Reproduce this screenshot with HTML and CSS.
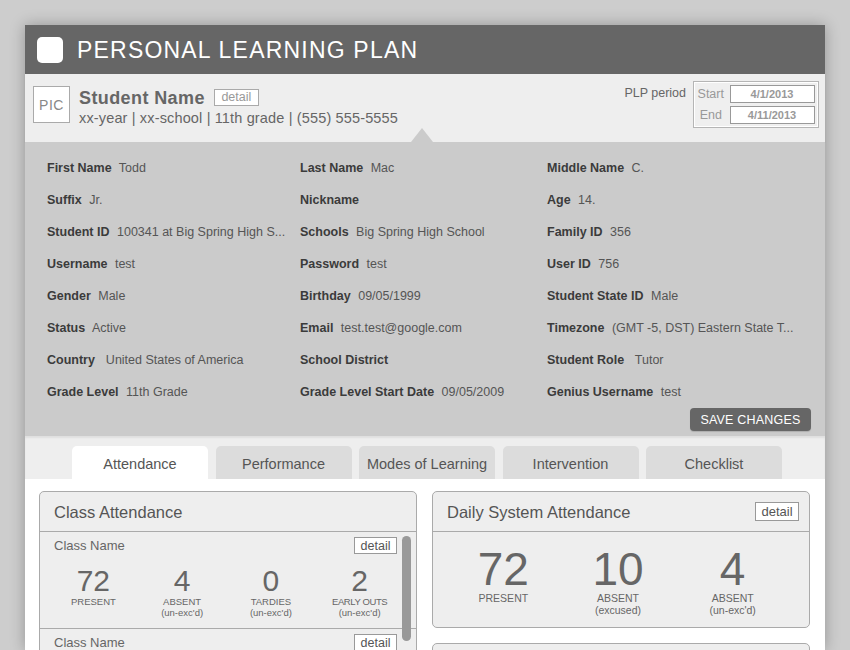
FILE: index.html
```html
<!DOCTYPE html>
<html lang="en">
<head>
<meta charset="utf-8">
<title>Personal Learning Plan</title>
<link rel="stylesheet" href="styles.css">
</head>
<body>
<div class="app">
  <header class="topbar">
    <span class="logo"></span>
    <h1 class="title">PERSONAL LEARNING PLAN</h1>
  </header>

  <section class="student">
    <div class="pic">PIC</div>
    <div class="who">
      <div class="name-line"><span class="name">Student Name</span><span class="detail-sm">detail</span></div>
      <div class="meta">xx-year | xx-school | 11th grade | (555) 555-5555</div>
    </div>
    <div class="period">
      <span class="period-label">PLP period</span>
      <div class="period-box">
        <div class="period-row"><span class="period-key">Start</span><span class="date">4/1/2013</span></div>
        <div class="period-row"><span class="period-key">End</span><span class="date">4/11/2013</span></div>
      </div>
    </div>
  </section>

  <section class="details">
    <div class="fields">
      <div class="field"><b>First Name</b> Todd</div>
      <div class="field"><b>Last Name</b> Mac</div>
      <div class="field"><b>Middle Name</b> C.</div>

      <div class="field"><b>Suffix</b> Jr.</div>
      <div class="field"><b>Nickname</b></div>
      <div class="field"><b>Age</b> 14.</div>

      <div class="field"><b>Student ID</b> 100341 at Big Spring High S...</div>
      <div class="field"><b>Schools</b> Big Spring High School</div>
      <div class="field"><b>Family ID</b> 356</div>

      <div class="field"><b>Username</b> test</div>
      <div class="field"><b>Password</b> test</div>
      <div class="field"><b>User ID</b> 756</div>

      <div class="field"><b>Gender</b> Male</div>
      <div class="field"><b>Birthday</b> 09/05/1999</div>
      <div class="field"><b>Student State ID</b> Male</div>

      <div class="field"><b>Status</b> Active</div>
      <div class="field"><b>Email</b> test.test@google.com</div>
      <div class="field"><b>Timezone</b> (GMT -5, DST) Eastern State T...</div>

      <div class="field"><b>Country</b>&nbsp; United States of America</div>
      <div class="field"><b>School District</b></div>
      <div class="field"><b>Student Role</b>&nbsp; Tutor</div>

      <div class="field"><b>Grade Level</b> 11th Grade</div>
      <div class="field"><b>Grade Level Start Date</b> 09/05/2009</div>
      <div class="field"><b>Genius Username</b> test</div>
    </div>
    <div class="actions"><button class="save">SAVE CHANGES</button></div>
  </section>

  <nav class="tabs">
    <span class="tab active">Attendance</span>
    <span class="tab">Performance</span>
    <span class="tab">Modes of Learning</span>
    <span class="tab">Intervention</span>
    <span class="tab">Checklist</span>
  </nav>

  <main class="content">
    <div class="col">
      <div class="card">
        <div class="card-head"><span class="card-title">Class Attendance</span></div>
        <div class="card-body scroll">
          <div class="class-row">
            <div class="row-head"><span class="class-name">Class Name</span><span class="detail-box">detail</span></div>
            <div class="stats four">
              <div class="stat"><span class="num">72</span><span class="lbl">PRESENT</span></div>
              <div class="stat"><span class="num">4</span><span class="lbl">ABSENT</span><span class="lbl">(un-exc'd)</span></div>
              <div class="stat"><span class="num">0</span><span class="lbl">TARDIES</span><span class="lbl">(un-exc'd)</span></div>
              <div class="stat"><span class="num">2</span><span class="lbl tight">EARLY OUTS</span><span class="lbl">(un-exc'd)</span></div>
            </div>
          </div>
          <div class="class-row">
            <div class="row-head"><span class="class-name">Class Name</span><span class="detail-box">detail</span></div>
          </div>
          <span class="scrollbar"></span>
        </div>
      </div>
    </div>
    <div class="col">
      <div class="card">
        <div class="card-head"><span class="card-title">Daily System Attendance</span><span class="detail-box big">detail</span></div>
        <div class="card-body">
          <div class="stats three">
            <div class="stat"><span class="num big">72</span><span class="lbl big">PRESENT</span></div>
            <div class="stat"><span class="num big">10</span><span class="lbl big">ABSENT</span><span class="lbl big">(excused)</span></div>
            <div class="stat"><span class="num big">4</span><span class="lbl big">ABSENT</span><span class="lbl big">(un-exc'd)</span></div>
          </div>
        </div>
      </div>
      <div class="card tall"></div>
    </div>
  </main>
</div>
</body>
</html>
```

FILE: styles.css
```css
html, body {
  margin: 0;
  padding: 0;
  height: 650px;
  overflow: hidden;
}

body {
  background: #cdcdcd;
  font-family: "Liberation Sans", Arial, sans-serif;
  color: #555;
  padding: 25px 25px 0;
  box-sizing: border-box;
}

.app {
  width: 800px;
  box-shadow: 0 0 14px rgba(0, 0, 0, 0.28);
}

/* Top bar */
.topbar {
  height: 49px;
  background: #666;
  display: flex;
  align-items: center;
  padding-left: 12px;
}

.logo {
  width: 26px;
  height: 26px;
  background: #fff;
  border-radius: 5px;
}

.title {
  margin: 2px 0 0 14px;
  color: #fff;
  font-weight: normal;
  font-size: 23px;
  letter-spacing: 1.2px;
  line-height: 1;
}

/* Student bar */
.student {
  height: 68px;
  background: #eee;
  display: flex;
  align-items: flex-start;
  padding: 0 6px 0 8px;
  box-sizing: border-box;
  box-shadow: 0 1px 1px rgba(0, 0, 0, 0.12);
  position: relative;
}

.pic {
  margin-top: 12px;
  width: 37px;
  height: 37px;
  box-sizing: border-box;
  border: 1px solid #aaa;
  background: #fff;
  color: #888;
  font-size: 14px;
  display: flex;
  align-items: center;
  justify-content: center;
  letter-spacing: 0.5px;
}

.who {
  margin-left: 9px;
  margin-top: 14.5px;
}

.name-line {
  display: flex;
  align-items: center;
  height: 20px;
}

.name {
  font-weight: bold;
  font-size: 18px;
  letter-spacing: 0.4px;
  color: #666;
}

.detail-sm {
  margin-left: 9px;
  width: 45px;
  height: 17px;
  box-sizing: border-box;
  border: 1px solid #aaa;
  background: #fff;
  color: #999;
  font-size: 12.5px;
  display: flex;
  align-items: center;
  justify-content: center;
  margin-top: -3px;
}

.meta {
  font-size: 14.5px;
  letter-spacing: 0.15px;
  color: #666;
  line-height: 18px;
}

.period {
  margin-left: auto;
  margin-top: 6.5px;
  display: flex;
  align-items: flex-start;
}

.period-label {
  font-size: 12.5px;
  color: #666;
  margin-top: 5.5px;
  margin-right: 7px;
}

.period-box {
  width: 126px;
  box-sizing: border-box;
  border: 1px solid #b5b5b5;
  box-shadow: inset 0 0 0 1px #fff;
  background: #efefef;
  padding: 3px 3px 3px 3.5px;
  display: flex;
  flex-direction: column;
  gap: 3px;
}

.period-row {
  display: flex;
  align-items: center;
}

.period-key {
  width: 26.5px;
  text-align: center;
  color: #999;
  font-size: 12.5px;
  margin-right: 5.5px;
}

.date {
  width: 85px;
  height: 18px;
  box-sizing: border-box;
  border: 1px solid #999;
  background: #fff;
  color: #999;
  font-size: 11px;
  font-weight: bold;
  display: flex;
  align-items: center;
  justify-content: center;
}

/* Details */
.details {
  background: #cbcbcb;
  padding: 10px 14px 5px 22px;
  position: relative;
}

.details::before {
  content: "";
  position: absolute;
  top: -14px;
  left: 386px;
  border-left: 11.5px solid transparent;
  border-right: 11.5px solid transparent;
  border-bottom: 14px solid #cbcbcb;
}

.fields {
  display: grid;
  grid-template-columns: 253px 247px 1fr;
  grid-auto-rows: 32px;
  align-items: center;
}

.field {
  font-size: 12.5px;
  color: #555;
  white-space: nowrap;
}

.field b {
  color: #3b3b3b;
  margin-right: 4px;
}

.actions {
  display: flex;
  justify-content: flex-end;
}

.save {
  width: 121px;
  height: 23px;
  border: none;
  border-radius: 4px;
  background: #666;
  color: #fff;
  font-family: "Liberation Sans", Arial, sans-serif;
  font-size: 12.5px;
  letter-spacing: 0.2px;
  padding: 0;
  box-shadow: 0 1px 1px rgba(0, 0, 0, 0.15);
}

/* Tabs */
.tabs {
  height: 43px;
  box-sizing: border-box;
  background: #eee;
  padding: 10px 0 0 47px;
  display: flex;
  gap: 7.5px;
  box-shadow: inset 0 2px 2px rgba(0, 0, 0, 0.06);
}

.tab {
  width: 136px;
  height: 33px;
  box-sizing: border-box;
  padding-top: 2px;
  line-height: 33px;
  text-align: center;
  background: #dcdcdc;
  border-radius: 5px 5px 0 0;
  font-size: 14.5px;
  color: #555;
  overflow: hidden;
}

.tab.active {
  background: #fff;
}

/* Content */
.content {
  background: #fff;
  height: 171px;
  overflow: hidden;
  box-sizing: border-box;
  padding: 12px 15px 0 14px;
  display: grid;
  grid-template-columns: 378px 378px;
  column-gap: 15px;
  align-items: start;
}

.col {
  display: flex;
  flex-direction: column;
  gap: 15px;
}

.card {
  border: 1px solid #aaa;
  border-radius: 5px;
  background: #eee;
}

.card.tall {
  height: 60px;
}

.card-head {
  height: 40px;
  box-sizing: border-box;
  padding: 1px 10px 0 14px;
  border-bottom: 1px solid #aaa;
  display: flex;
  align-items: center;
  justify-content: space-between;
}

.card-title {
  font-size: 16.5px;
  color: #555;
}

.card-body {
  position: relative;
}

.card-body.scroll {
  height: 200px;
}

.class-row {
  border-bottom: 1px solid #aaa;
}

.row-head {
  display: flex;
  justify-content: space-between;
  align-items: center;
  padding: 5px 19px 0 14px;
  height: 17px;
}

.class-name {
  font-size: 13px;
  color: #666;
}

.detail-box {
  width: 43px;
  height: 17px;
  box-sizing: border-box;
  border: 1px solid #999;
  background: #fff;
  color: #555;
  font-size: 12.5px;
  display: flex;
  align-items: center;
  justify-content: center;
}

.detail-box.big {
  width: 44px;
  height: 19px;
  font-size: 13px;
  margin-top: -1px;
}

.stats {
  display: grid;
}

.stats.four {
  grid-template-columns: repeat(4, 1fr);
  padding: 12px 12px 10px 9px;
}

.stats.three {
  grid-template-columns: repeat(3, 1fr);
  padding: 14px 19px 11px 13px;
}

.stat {
  display: flex;
  flex-direction: column;
  align-items: center;
}

.num {
  font-size: 30px;
  line-height: 30px;
  color: #666;
}

.num.big {
  font-size: 46px;
  line-height: 46px;
}

.lbl {
  font-size: 9.5px;
  line-height: 11px;
  color: #666;
}

.lbl.tight {
  letter-spacing: -0.4px;
}

.lbl.big {
  font-size: 10.5px;
  line-height: 12px;
}

.scrollbar {
  position: absolute;
  top: 4px;
  right: 5px;
  width: 9px;
  height: 105px;
  border-radius: 5px;
  background: #999;
}
```
